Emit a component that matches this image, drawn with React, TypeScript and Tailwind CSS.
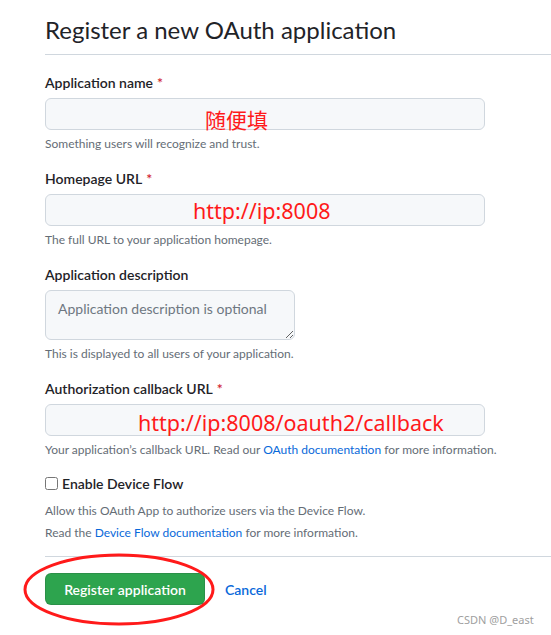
import React from 'react';

const fieldInput =
  'block h-[32px] w-[440px] rounded-[6px] border border-[#d0d7de] bg-[#f6f8fa] px-[12px] text-[14px] outline-none';

function Label({ text, required }: { text: string; required?: boolean }) {
  return (
    <label className="mb-[5px] block text-[14px] font-semibold leading-[21px]">
      {text}
      {required && <span className="ml-[4px] text-[#d1242f]">*</span>}
    </label>
  );
}

function Note({ children }: { children: React.ReactNode }) {
  return <p className="mt-[5px] text-[12px] leading-[18px] text-[#656d76]">{children}</p>;
}

export default function App() {
  return (
    <div className="relative min-h-screen overflow-hidden bg-white pl-[45px] pt-[12px] font-['Segoe_UI','Lato',sans-serif] text-[#1f2328]">
      <div className="border-b border-[#d0d7de] pb-[6px]">
        <h1 className="text-[24px] font-normal leading-[36px]">Register a new OAuth application</h1>
      </div>

      <form className="mt-[17px]" onSubmit={(e) => e.preventDefault()}>
        <div className="mb-[15px]">
          <Label text="Application name" required />
          <div className="relative">
            <input className={fieldInput} />
            {/* red annotation */}
            <span className="absolute left-[160px] top-[11px] font-['Noto_Sans_CJK_SC',sans-serif] text-[21px] leading-[21px] text-[#ff1a1a]">
              随便填
            </span>
          </div>
          <Note>Something users will recognize and trust.</Note>
        </div>

        <div className="mb-[15px]">
          <Label text="Homepage URL" required />
          <div className="relative">
            <input className={fieldInput} />
            <span className="absolute left-[148px] top-[6px] font-['Noto_Sans','Noto_Sans_CJK_SC',sans-serif] text-[21.5px] leading-[22px] text-[#ff1a1a]">
              http://ip:8008
            </span>
          </div>
          <Note>The full URL to your application homepage.</Note>
        </div>

        <div className="mb-[15px]">
          <Label text="Application description" />
          <textarea
            placeholder="Application description is optional"
            className="block h-[50px] w-[250px] rounded-[6px] border border-[#d0d7de] bg-[#f6f8fa] px-[12px] py-[8px] text-[14px] leading-[20px] outline-none placeholder:text-[#6e7781]"
          />
          <Note>This is displayed to all users of your application.</Note>
        </div>

        <div className="mb-[14px]">
          <Label text="Authorization callback URL" required />
          <div className="relative">
            <input className={fieldInput} />
            <span className="absolute left-[93px] top-[8px] font-['Noto_Sans','Noto_Sans_CJK_SC',sans-serif] text-[21.5px] leading-[22px] text-[#ff1a1a]">
              http://ip:8008/oauth2/callback
            </span>
          </div>
          <Note>
            Your application’s callback URL. Read our{' '}
            <a className="text-[#0969da]">OAuth documentation</a> for more information.
          </Note>
        </div>

        <div className="border-b border-[#d0d7de] pb-[14px]">
          <label className="flex items-center gap-[4px] text-[14px] font-semibold leading-[21px]">
            <input type="checkbox" className="m-0 h-[13px] w-[13px]" />
            Enable Device Flow
          </label>
          <p className="mt-[8px] text-[12px] leading-[18px] text-[#656d76]">
            Allow this OAuth App to authorize users via the Device Flow.
          </p>
          <p className="mt-[4px] text-[12px] leading-[18px] text-[#656d76]">
            Read the <a className="text-[#0969da]">Device Flow documentation</a> for more information.
          </p>
        </div>

        <div className="relative mt-[16px] flex items-center gap-[20px]">
          <button
            type="submit"
            className="h-[32px] w-[160px] rounded-[6px] border border-[#1f232826] bg-[#2da44e] text-[14px] font-semibold text-white"
          >
            Register application
          </button>
          <a className="text-[14px] font-semibold text-[#0969da]">Cancel</a>
          {/* red ellipse drawn around the button */}
          <svg
            className="pointer-events-none absolute left-[-22px] top-[-20px]"
            width="192"
            height="73"
            viewBox="0 0 192 73"
          >
            <ellipse cx="96" cy="36.5" rx="94" ry="34.5" fill="none" stroke="#ff1a1a" strokeWidth="3" />
          </svg>
        </div>
      </form>

      <span className="absolute left-[457px] top-[612px] font-['Noto_Sans',sans-serif] text-[11px] leading-[16px] text-[#a0a0a0]">
        CSDN @D_east
      </span>
    </div>
  );
}
